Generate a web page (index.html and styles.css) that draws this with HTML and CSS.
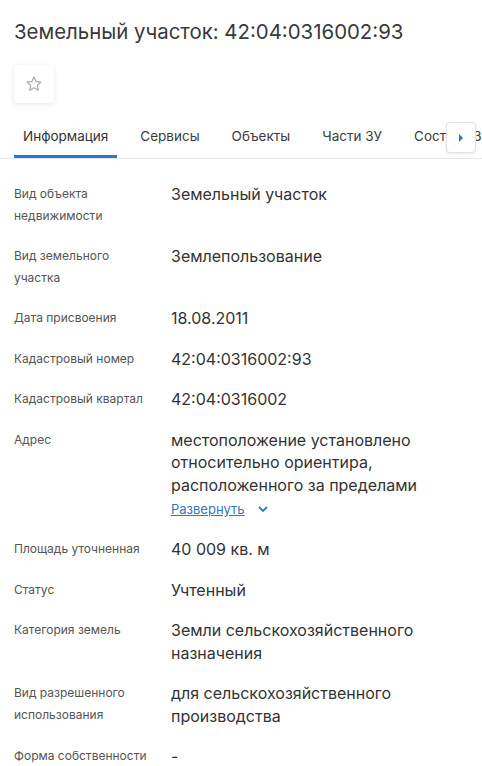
FILE: index.html
```html
<!DOCTYPE html>
<html lang="ru">
<head>
    <meta charset="UTF-8">
    <title>Земельный участок</title>
    <link rel="stylesheet" href="styles.css">
</head>
<body>
<div class="card">
    <h1 class="title">Земельный участок: 42:04:0316002:93</h1>

    <button class="fav" type="button" aria-label="В избранное">
        <svg width="18" height="18" viewBox="0 0 24 24" fill="none" stroke="#a8a8a8" stroke-width="1.6" stroke-linejoin="round">
            <path d="M12 2.8l2.8 6 6.4.7-4.8 4.4 1.4 6.4L12 17l-5.8 3.3 1.4-6.4-4.8-4.4 6.4-.7z"/>
        </svg>
    </button>

    <div class="tabs">
        <div class="tabs-list">
            <span class="tab active">Информация</span>
            <span class="tab">Сервисы</span>
            <span class="tab">Объекты</span>
            <span class="tab">Части ЗУ</span>
            <span class="tab">Состав ЕЗП</span>
        </div>
        <button class="tabs-next" type="button" aria-label="Далее">
            <svg width="6" height="8" viewBox="0 0 6 8"><path d="M1 0l4 4-4 4z" fill="#2f78c0"/></svg>
        </button>
    </div>

    <dl class="props">
        <div class="row">
            <dt>Вид объекта недвижимости</dt>
            <dd>Земельный участок</dd>
        </div>
        <div class="row">
            <dt>Вид земельного участка</dt>
            <dd>Землепользование</dd>
        </div>
        <div class="row">
            <dt>Дата присвоения</dt>
            <dd>18.08.2011</dd>
        </div>
        <div class="row">
            <dt>Кадастровый номер</dt>
            <dd>42:04:0316002:93</dd>
        </div>
        <div class="row">
            <dt>Кадастровый квартал</dt>
            <dd>42:04:0316002</dd>
        </div>
        <div class="row">
            <dt>Адрес</dt>
            <dd>
                местоположение установлено относительно ориентира, расположенного за пределами
                <a class="more" href="#">Развернуть
                    <svg width="10" height="6" viewBox="0 0 10 6"><path d="M1 1l4 4 4-4" fill="none" stroke="#2f78c0" stroke-width="1.8"/></svg>
                </a>
            </dd>
        </div>
        <div class="row">
            <dt>Площадь уточненная</dt>
            <dd>40 009 кв. м</dd>
        </div>
        <div class="row">
            <dt>Статус</dt>
            <dd>Учтенный</dd>
        </div>
        <div class="row">
            <dt>Категория земель</dt>
            <dd>Земли сельскохозяйственного назначения</dd>
        </div>
        <div class="row">
            <dt>Вид разрешенного использования</dt>
            <dd>для сельскохозяйственного производства</dd>
        </div>
        <div class="row">
            <dt>Форма собственности</dt>
            <dd>-</dd>
        </div>
    </dl>
</div>
</body>
</html>
```

FILE: styles.css
```css
html * {
    box-sizing: border-box;
}

body {
    margin: 0;
    background: #fff;
    color: #343434;
    font-family: Inter, "Noto Sans", sans-serif;
}

.card {
    width: 482px;
    overflow: hidden;
}

.title {
    margin: 0;
    padding: 19px 14px 0;
    font-size: 20.4px;
    font-weight: 400;
    line-height: 26px;
    color: #3a3a3a;
}

.fav {
    display: flex;
    align-items: center;
    justify-content: center;
    width: 40px;
    height: 38px;
    margin: 20px 0 0 14px;
    padding: 0;
    border: none;
    border-radius: 3px;
    background: #fff;
    box-shadow: 0 1px 4px rgba(0, 0, 0, 0.1);
}

.tabs {
    position: relative;
    margin-top: 19px;
    border-bottom: 1px solid #e6e6e6;
}

.tabs-list {
    display: flex;
    padding-left: 14px;
    white-space: nowrap;
}

.tab {
    padding: 6px 9px 10px;
    margin-right: 14px;
    font-size: 13.5px;
    line-height: 17px;
    color: #3d3d3d;
    border-bottom: 3px solid transparent;
}

.tab.active {
    color: #333;
    border-bottom-color: #2f78c0;
}

.tabs-next {
    position: absolute;
    right: 6px;
    top: 0;
    width: 30px;
    height: 31px;
    display: flex;
    align-items: center;
    justify-content: center;
    padding: 0;
    background: #fff;
    border: 1px solid #e2e2e2;
    border-radius: 4px;
    box-shadow: 0 1px 3px rgba(0, 0, 0, 0.08);
}

.props {
    margin: 0;
    padding: 15px 14px 0;
}

.row {
    display: flex;
    padding: 9px 0;
}

.row dt {
    width: 157px;
    flex-shrink: 0;
    padding-right: 17px;
    font-size: 12px;
    line-height: 22px;
    color: #555;
}

.row dd {
    margin: 0;
    flex: 1;
    padding-right: 50px;
    font-size: 16px;
    line-height: 22.5px;
    color: #333;
}

.more {
    display: inline-flex;
    align-items: center;
    gap: 13px;
    margin-top: 2px;
    font-size: 13px;
    line-height: 22px;
    color: #2f78c0;
    text-decoration: underline;
}

.more svg {
    display: block;
}
```
